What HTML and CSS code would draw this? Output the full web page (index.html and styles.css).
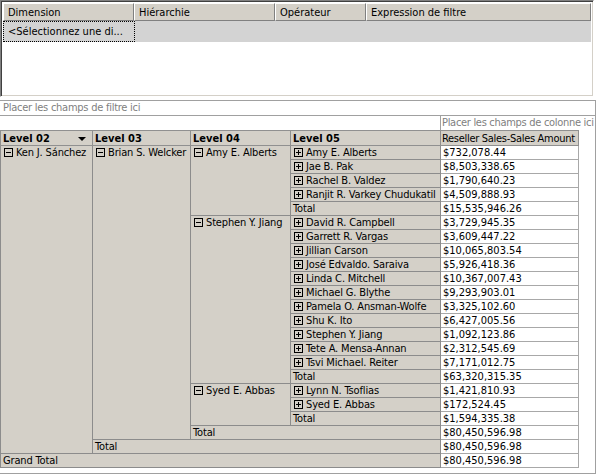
FILE: index.html
```html
<!DOCTYPE html>
<html lang="fr">
<head>
    <meta charset="UTF-8">
    <title>Filtre et tableau croisé</title>
    <link rel="stylesheet" href="styles.css">
</head>
<body>

    <div class="filters">
        <div class="filters-head">
            <div class="fh c1">Dimension</div>
            <div class="fh c2">Hiérarchie</div>
            <div class="fh c3">Opérateur</div>
            <div class="fh c4">Expression de filtre</div>
        </div>
        <div class="filters-row">
            <div class="fc c1 focus">&lt;Sélectionnez une di...</div>
            <div class="fc c2"></div>
            <div class="fc c3"></div>
            <div class="fc c4"></div>
        </div>
    </div>

    <div class="pivot">
        <div class="drop-filter">Placer les champs de filtre ici</div>
        <div class="drop-col-row">
            <div class="drop-col">Placer les champs de colonne ici</div>
        </div>

        <table class="grid">
            <colgroup>
                <col class="w02"><col class="w03"><col class="w04"><col class="w05"><col class="wval">
            </colgroup>
            <tr class="head">
                <th>Level 02 <span class="arrow"></span></th>
                <th>Level 03</th>
                <th>Level 04</th>
                <th>Level 05</th>
                <th class="measure">Reseller Sales-Sales Amount</th>
            </tr>
            <tr>
                <td class="rh top" rowspan="22"><span class="tg"></span>Ken J. Sánchez</td>
                <td class="rh top" rowspan="21"><span class="tg"></span>Brian S. Welcker</td>
                <td class="rh top" rowspan="5"><span class="tg"></span>Amy E. Alberts</td>
                <td class="rh"><span class="tg plus"></span>Amy E. Alberts</td>
                <td class="val">$732,078.44</td>
            </tr>
            <tr><td class="rh"><span class="tg plus"></span>Jae B. Pak</td><td class="val">$8,503,338.65</td></tr>
            <tr><td class="rh"><span class="tg plus"></span>Rachel B. Valdez</td><td class="val">$1,790,640.23</td></tr>
            <tr><td class="rh"><span class="tg plus"></span>Ranjit R. Varkey Chudukatil</td><td class="val">$4,509,888.93</td></tr>
            <tr><td class="rh total">Total</td><td class="val">$15,535,946.26</td></tr>
            <tr>
                <td class="rh top" rowspan="12"><span class="tg"></span>Stephen Y. Jiang</td>
                <td class="rh"><span class="tg plus"></span>David R. Campbell</td>
                <td class="val">$3,729,945.35</td>
            </tr>
            <tr><td class="rh"><span class="tg plus"></span>Garrett R. Vargas</td><td class="val">$3,609,447.22</td></tr>
            <tr><td class="rh"><span class="tg plus"></span>Jillian Carson</td><td class="val">$10,065,803.54</td></tr>
            <tr><td class="rh"><span class="tg plus"></span>José Edvaldo. Saraiva</td><td class="val">$5,926,418.36</td></tr>
            <tr><td class="rh"><span class="tg plus"></span>Linda C. Mitchell</td><td class="val">$10,367,007.43</td></tr>
            <tr><td class="rh"><span class="tg plus"></span>Michael G. Blythe</td><td class="val">$9,293,903.01</td></tr>
            <tr><td class="rh"><span class="tg plus"></span>Pamela O. Ansman-Wolfe</td><td class="val">$3,325,102.60</td></tr>
            <tr><td class="rh"><span class="tg plus"></span>Shu K. Ito</td><td class="val">$6,427,005.56</td></tr>
            <tr><td class="rh"><span class="tg plus"></span>Stephen Y. Jiang</td><td class="val">$1,092,123.86</td></tr>
            <tr><td class="rh"><span class="tg plus"></span>Tete A. Mensa-Annan</td><td class="val">$2,312,545.69</td></tr>
            <tr><td class="rh"><span class="tg plus"></span>Tsvi Michael. Reiter</td><td class="val">$7,171,012.75</td></tr>
            <tr><td class="rh total">Total</td><td class="val">$63,320,315.35</td></tr>
            <tr>
                <td class="rh top" rowspan="3"><span class="tg"></span>Syed E. Abbas</td>
                <td class="rh"><span class="tg plus"></span>Lynn N. Tsoflias</td>
                <td class="val">$1,421,810.93</td>
            </tr>
            <tr><td class="rh"><span class="tg plus"></span>Syed E. Abbas</td><td class="val">$172,524.45</td></tr>
            <tr><td class="rh total">Total</td><td class="val">$1,594,335.38</td></tr>
            <tr><td class="rh total" colspan="2">Total</td><td class="val">$80,450,596.98</td></tr>
            <tr><td class="rh total" colspan="3">Total</td><td class="val">$80,450,596.98</td></tr>
            <tr><td class="rh total" colspan="4">Grand Total</td><td class="val">$80,450,596.98</td></tr>
        </table>
    </div>

</body>
</html>
```

FILE: styles.css
```css
body {
    margin: 0;
    background-color: #fff;
    font-family: 'DejaVu Sans Condensed', 'Liberation Sans', Arial, sans-serif;
    font-size: 11px;
    color: #000;
}

/* filter grid (top) */
.filters {
    width: 594px;
    height: 97px;
    box-sizing: border-box;
    border-top: 1px solid #808080;
    border-left: 1px solid #808080;
    border-right: 1px solid #fff;
    border-bottom: 1px solid #fff;
    box-shadow: inset 1px 1px 0 #404040, inset -1px -1px 0 #d4d0c8;
    padding: 2px 2px 0 2px;
}

.filters-head,
.filters-row {
    display: flex;
}

.c1 { width: 131px; }
.c2 { width: 141px; }
.c3 { width: 91px; }
.c4 { flex: 1; }

.fh {
    height: 18px;
    line-height: 17px;
    box-sizing: border-box;
    padding-left: 4px;
    background-color: #d4d0c8;
    border-top: 1px solid #fff;
    border-left: 1px solid #fff;
    border-right: 1px solid #808080;
    border-bottom: 1px solid #808080;
    white-space: nowrap;
    overflow: hidden;
}

.fc {
    height: 21px;
    line-height: 19px;
    box-sizing: border-box;
    background-color: #d3d3d3;
}

.fc.focus {
    width: 132px;
    padding-left: 4px;
    border: 1px dotted #000;
}

/* pivot table */
.pivot {
    margin-top: 3px;
    width: 596px;
    height: 374px;
    box-sizing: border-box;
    border: 1px solid #a0a0a0;
    border-left: none;
    display: flex;
    flex-direction: column;
}

.drop-filter {
    height: 15px;
    line-height: 14px;
    box-sizing: border-box;
    padding-left: 3px;
    color: #808080;
    letter-spacing: -0.25px;
    border-bottom: 1px solid #a0a0a0;
}

.drop-col-row {
    display: flex;
    justify-content: flex-end;
    height: 14px;
}

.drop-col {
    width: 155px;
    box-sizing: border-box;
    padding-left: 1px;
    line-height: 13px;
    color: #808080;
    letter-spacing: -0.3px;
    border-left: 1px solid #a0a0a0;
    white-space: nowrap;
}

.grid {
    border-collapse: collapse;
    table-layout: fixed;
    width: 578px;
}

.w02 { width: 92px; }
.w03 { width: 98px; }
.w04 { width: 100px; }
.w05 { width: 150px; }
.wval { width: 138px; }

.grid th,
.grid td {
    padding: 0 0 0 2px;
    height: 13px;
    line-height: 13px;
    white-space: nowrap;
    overflow: hidden;
    text-align: left;
}

.grid th {
    height: 14px;
    font-weight: bold;
    background-color: #d4d0c8;
    border: 1px solid #909090;
}

.grid th.measure {
    font-weight: normal;
    padding-left: 1px;
    letter-spacing: -0.3px;
}

.arrow {
    float: right;
    margin: 5px 6px 0 0;
    border-left: 4px solid transparent;
    border-right: 4px solid transparent;
    border-top: 4px solid #000;
}

.rh {
    background-color: #d4d0c8;
    border: 1px solid #8c8c8c;
    letter-spacing: -0.15px;
}

.rh.top {
    vertical-align: top;
}

.val {
    background-color: #fff;
    border: 1px solid #a8a8a8;
}

.tg {
    display: inline-block;
    width: 7px;
    height: 7px;
    border: 1px solid #000;
    margin: 0 3px 0 1px;
    vertical-align: -1px;
    background: linear-gradient(#000, #000) center / 5px 1px no-repeat;
}

.tg.plus {
    background:
        linear-gradient(#000, #000) center / 5px 1px no-repeat,
        linear-gradient(#000, #000) center / 1px 5px no-repeat;
}
```
